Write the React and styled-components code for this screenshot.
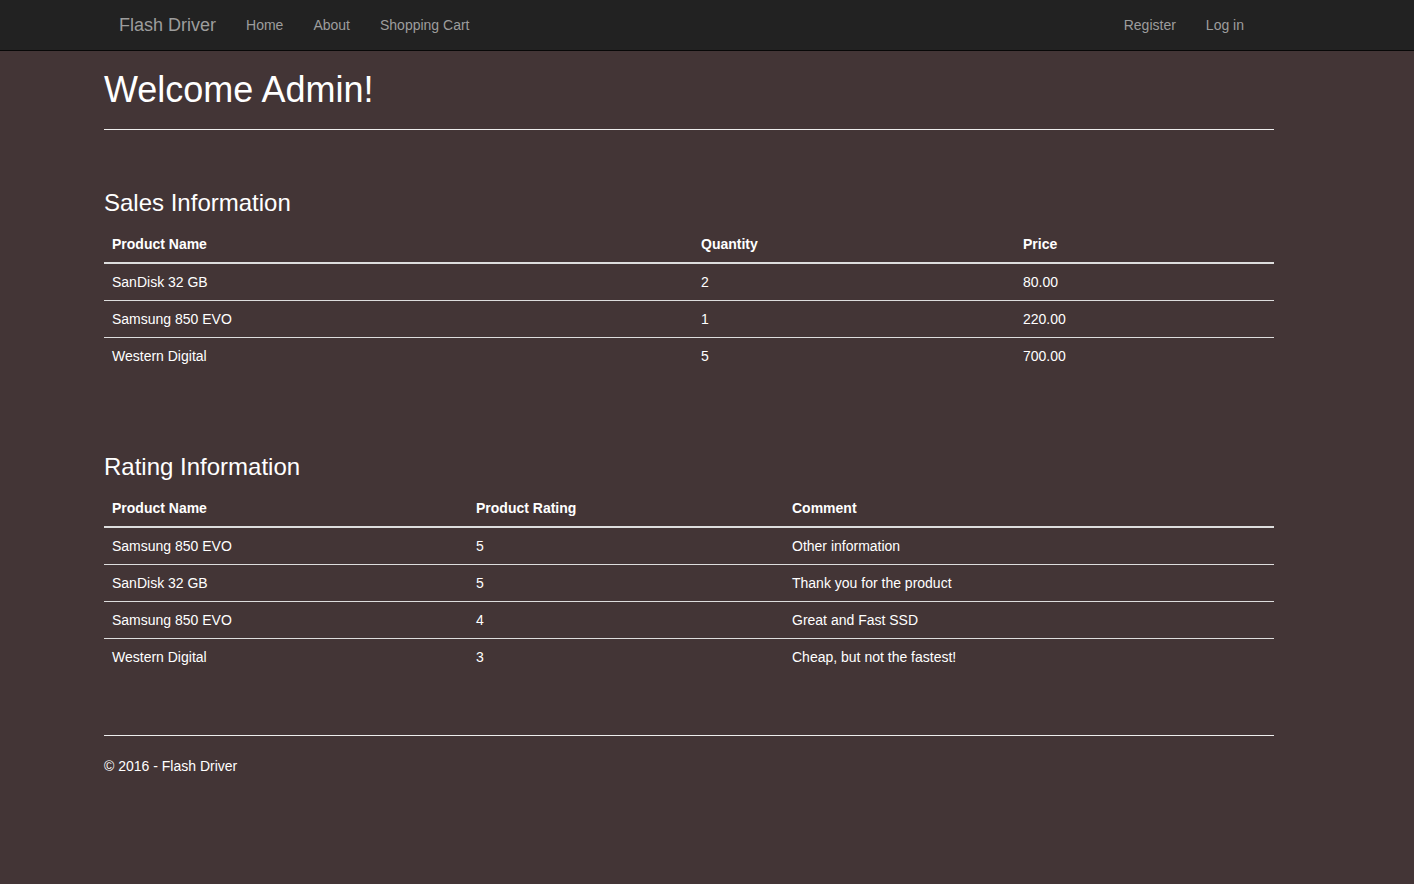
import styled, { createGlobalStyle } from "styled-components";

const GlobalStyle = createGlobalStyle`
  html, body {
    margin: 0;
    padding: 0;
    min-height: 100%;
    background: #433536;
  }
  body {
    font-family: "Liberation Sans", Arial, sans-serif;
    font-size: 14px;
    line-height: 20px;
    color: #fff;
  }
  * {
    box-sizing: border-box;
  }
`;

const Navbar = styled.nav`
  height: 51px;
  background: #222;
  border-bottom: 1px solid #080808;
`;

const NavInner = styled.div`
  width: 1170px;
  margin-left: 104px;
  display: flex;
  align-items: center;
  justify-content: space-between;
  height: 50px;
`;

const NavGroup = styled.div`
  display: flex;
  align-items: center;
  margin-right: ${(p) => (p.$right ? 15 : 0)}px;
`;

const Brand = styled.a`
  font-size: 18px;
  line-height: 20px;
  padding: 15px;
  color: #9d9d9d;
  text-decoration: none;
`;

const NavLink = styled.a`
  font-size: 14px;
  line-height: 20px;
  padding: 15px;
  color: #9d9d9d;
  text-decoration: none;
`;

const Body = styled.main`
  width: 1170px;
  margin-left: 104px;
`;

const Title = styled.h1`
  font-size: 36px;
  font-weight: 400;
  line-height: 1.1;
  margin: 19px 0 0;
`;

const Rule = styled.hr`
  border: 0;
  border-top: 1px solid #eee;
  margin: ${(p) => p.$top}px 0 0;
`;

const Section = styled.h3`
  font-size: 24px;
  font-weight: 400;
  line-height: 26.4px;
  margin: ${(p) => p.$top}px 0 10px;
`;

const Table = styled.table`
  width: 100%;
  border-collapse: collapse;
  border-spacing: 0;
`;

const Th = styled.th`
  text-align: left;
  font-weight: 700;
  padding: 8px;
  line-height: 20px;
  border-bottom: 2px solid #ddd;
  width: ${(p) => p.$w}px;
`;

const Td = styled.td`
  padding: 8px;
  line-height: 20px;
  border-top: 1px solid #ddd;
`;

const Footer = styled.footer`
  margin-top: 20px;
  line-height: 20px;
`;

const Copyright = styled.p`
  margin: 0 0 10px;
`;

const sales = [
  ["SanDisk 32 GB", "2", "80.00"],
  ["Samsung 850 EVO", "1", "220.00"],
  ["Western Digital", "5", "700.00"],
];

const ratings = [
  ["Samsung 850 EVO", "5", "Other information"],
  ["SanDisk 32 GB", "5", "Thank you for the product"],
  ["Samsung 850 EVO", "4", "Great and Fast SSD"],
  ["Western Digital", "3", "Cheap, but not the fastest!"],
];

function DataTable({ cols, rows }) {
  return (
    <Table>
      <thead>
        <tr>
          {cols.map(([label, w]) => (
            <Th key={label} $w={w}>
              {label}
            </Th>
          ))}
        </tr>
      </thead>
      <tbody>
        {rows.map((r, i) => (
          <tr key={i}>
            {r.map((c, j) => (
              <Td key={j}>{c}</Td>
            ))}
          </tr>
        ))}
      </tbody>
    </Table>
  );
}

export default function App() {
  return (
    <>
      <GlobalStyle />
      <Navbar>
        <NavInner>
          <NavGroup>
            <Brand href="#">Flash Driver</Brand>
            <NavLink href="#">Home</NavLink>
            <NavLink href="#">About</NavLink>
            <NavLink href="#">Shopping Cart</NavLink>
          </NavGroup>
          <NavGroup $right>
            <NavLink href="#">Register</NavLink>
            <NavLink href="#">Log in</NavLink>
          </NavGroup>
        </NavInner>
      </Navbar>
      <Body>
        <Title>Welcome Admin!</Title>
        <Rule $top={19} />
        <Section $top={60}>Sales Information</Section>
        <DataTable
          cols={[
            ["Product Name", 589],
            ["Quantity", 322],
            ["Price", 259],
          ]}
          rows={sales}
        />
        <Section $top={80}>Rating Information</Section>
        <DataTable
          cols={[
            ["Product Name", 364],
            ["Product Rating", 316],
            ["Comment", 490],
          ]}
          rows={ratings}
        />
        <Rule $top={60} />
        <Footer>
          <Copyright>© 2016 - Flash Driver</Copyright>
        </Footer>
      </Body>
    </>
  );
}
